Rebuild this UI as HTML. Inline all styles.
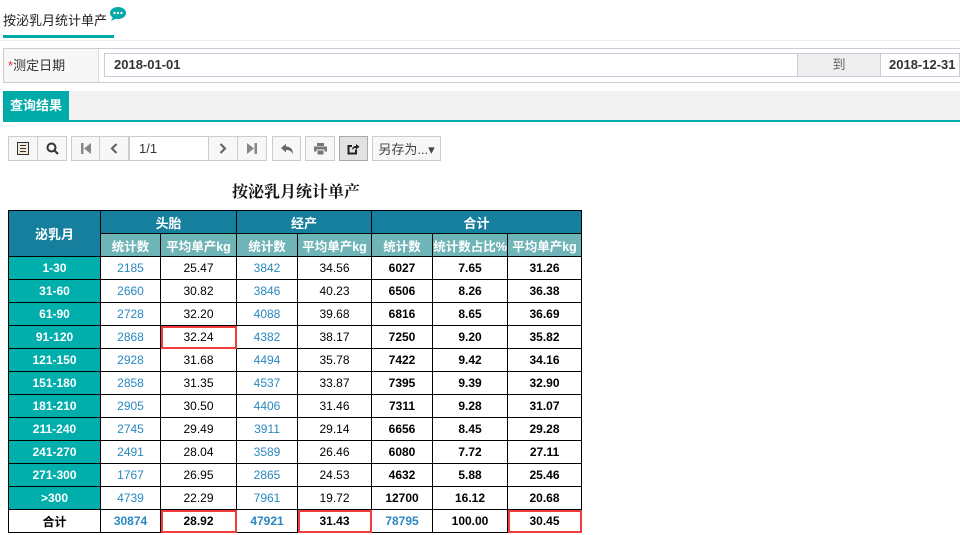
<!DOCTYPE html><html><head><meta charset="utf-8"><style>
body{margin:0;width:960px;height:535px;overflow:hidden;background:#fff;font-family:"Liberation Sans","Noto Sans CJK SC",sans-serif;position:relative}
.a{position:absolute}
.btn{position:absolute;top:136px;height:25px;border:1px solid #ccc;background:#f7f7f7;box-sizing:border-box;display:flex;align-items:center;justify-content:center;color:#555;font-size:13px}
table{position:absolute;left:8px;top:210px;border-collapse:collapse;table-layout:fixed;font-size:12px}
td{border:1px solid #000;height:22px;padding:0;text-align:center;box-sizing:border-box}
.h1{background:#177f9e;color:#fff;font-weight:bold;font-size:13px}
.h2{background:#6fb4b7;color:#fff;font-weight:bold;font-size:12.5px}
.l{background:#00aeac;color:#fff;font-weight:bold}
.b{color:#2a88c0}
.k{font-weight:bold}
.r{outline:2px solid #f03c3c;outline-offset:-2px}
</style></head><body>
<div class="a" style="left:3px;top:10px;font-size:13px;color:#222">按泌乳月统计单产</div>
<svg class="a" style="left:109px;top:6px" width="18" height="16" viewBox="0 0 18 16"><ellipse cx="9" cy="7" rx="8" ry="6" fill="#00a9a6"/><path d="M4 11 L2 15 L8 12Z" fill="#00a9a6"/><circle cx="5.5" cy="7" r="1.2" fill="#fff"/><circle cx="9" cy="7" r="1.2" fill="#fff"/><circle cx="12.5" cy="7" r="1.2" fill="#fff"/></svg>
<div class="a" style="left:3px;top:35px;width:111px;height:3px;background:#00aaa8"></div>
<div class="a" style="left:0;top:40px;width:960px;height:1px;background:#eee"></div>
<div class="a" style="left:3px;top:48px;width:957px;height:35px;border:1px solid #ccc;border-right:none;box-sizing:border-box;background:#fff"></div>
<div class="a" style="left:4px;top:49px;width:95px;height:33px;background:#f7f7f7;border-right:1px solid #ddd;font-size:13px;color:#333;line-height:33px;padding-left:4px;box-sizing:border-box"><span style="color:#d33">*</span>测定日期</div>
<div class="a" style="left:104px;top:53px;width:856px;height:24px;border:1px solid #ccd;box-sizing:border-box;font-size:13px;font-weight:bold;color:#333;line-height:22px;padding-left:9px">2018-01-01</div>
<div class="a" style="left:797px;top:53px;width:84px;height:24px;background:#eee;border:1px solid #ccd;box-sizing:border-box;font-size:13px;color:#666;text-align:center;line-height:22px">到</div>
<div class="a" style="left:889px;top:53px;font-size:13px;font-weight:bold;color:#333;line-height:24px">2018-12-31</div>
<div class="a" style="left:3px;top:91px;width:957px;height:29px;background:#f2f2f2"></div>
<div class="a" style="left:3px;top:91px;width:66px;height:29px;background:#00aaa8;color:#fff;font-size:13px;font-weight:bold;line-height:29px;text-align:center">查询结果</div>
<div class="a" style="left:3px;top:120px;width:957px;height:2px;background:#00aaa8"></div>
<div class="btn" style="left:8px;width:30px"><svg width="12" height="13"><rect x="0.5" y="0.5" width="11" height="12" fill="#f3e9d8" stroke="#333"/><path d="M3 3.5H9M3 6.5H9M3 9.5H9" stroke="#333"/></svg></div>
<div class="btn" style="left:37px;width:30px"><svg width="13" height="13"><circle cx="5.5" cy="5.5" r="4" stroke="#333" stroke-width="2" fill="none"/><path d="M8.5 8.5 L12 12" stroke="#333" stroke-width="2"/></svg></div>
<div class="btn" style="left:71px;width:29px"><svg width="10" height="11"><rect x="0" y="0" width="2.5" height="11" fill="#888"/><path d="M10 0 L3 5.5 L10 11Z" fill="#888"/></svg></div>
<div class="btn" style="left:99px;width:30px"><svg width="8" height="11"><path d="M6.5 1 L2 5.5 L6.5 10" stroke="#666" stroke-width="2.2" fill="none"/></svg></div>
<div class="btn" style="left:129px;width:80px;background:#fff;justify-content:flex-start;padding-left:9px;color:#333">1/1</div>
<div class="btn" style="left:208px;width:30px"><svg width="8" height="11"><path d="M1.5 1 L6 5.5 L1.5 10" stroke="#666" stroke-width="2.2" fill="none"/></svg></div>
<div class="btn" style="left:237px;width:30px"><svg width="10" height="11"><path d="M0 0 L7 5.5 L0 11Z" fill="#888"/><rect x="7.5" y="0" width="2.5" height="11" fill="#888"/></svg></div>
<div class="btn" style="left:272px;width:29px"><svg width="12" height="10"><path d="M0 4 L5 0 V2.5 C9 2.5 12 5 12 10 C10 6.5 8 6 5 6 V8.5Z" fill="#666"/></svg></div>
<div class="btn" style="left:305px;width:30px"><svg width="13" height="12"><rect x="3" y="0" width="7" height="3" fill="#777"/><rect x="0" y="3.5" width="13" height="5" fill="#777"/><rect x="3" y="7" width="7" height="5" fill="#777" stroke="#f7f7f7"/></svg></div>
<div class="btn" style="left:339px;width:29px;background:#e2e2e2;border-color:#aaa"><svg width="13" height="12"><path d="M9 6.5V10.5H1.5V3H5" stroke="#222" stroke-width="2" fill="none"/><path d="M5 7 C5 4 7 3 9 3 V1 L12.5 3.8 L9 6.5 V5 C7.5 5 6 5.5 5 7Z" fill="#222"/></svg></div>
<div class="btn" style="left:372px;width:69px;color:#444">另存为...&#9662;</div>
<div class="a" style="left:0;width:592px;top:179px;text-align:center;font-size:16px;font-weight:bold;font-family:'Liberation Serif','Noto Serif CJK SC',serif;color:#111">按泌乳月统计单产</div>
<table>
<colgroup><col style="width:92px"><col style="width:60px"><col style="width:76px"><col style="width:61px"><col style="width:74px"><col style="width:61px"><col style="width:75px"><col style="width:74px"></colgroup>
<tr style="height:23px"><td class="h1" rowspan="2">泌乳月</td><td class="h1" colspan="2">头胎</td><td class="h1" colspan="2">经产</td><td class="h1" colspan="3">合计</td></tr>
<tr style="height:23px"><td class="h2">统计数</td><td class="h2">平均单产kg</td><td class="h2">统计数</td><td class="h2">平均单产kg</td><td class="h2">统计数</td><td class="h2" style="white-space:nowrap;overflow:hidden">统计数占比%</td><td class="h2">平均单产kg</td></tr>
<tr style="height:23px"><td class="l">1-30</td><td class="b">2185</td><td>25.47</td><td class="b">3842</td><td>34.56</td><td class="k">6027</td><td class="k">7.65</td><td class="k">31.26</td></tr>
<tr style="height:23px"><td class="l">31-60</td><td class="b">2660</td><td>30.82</td><td class="b">3846</td><td>40.23</td><td class="k">6506</td><td class="k">8.26</td><td class="k">36.38</td></tr>
<tr style="height:23px"><td class="l">61-90</td><td class="b">2728</td><td>32.20</td><td class="b">4088</td><td>39.68</td><td class="k">6816</td><td class="k">8.65</td><td class="k">36.69</td></tr>
<tr style="height:23px"><td class="l">91-120</td><td class="b">2868</td><td class="r">32.24</td><td class="b">4382</td><td>38.17</td><td class="k">7250</td><td class="k">9.20</td><td class="k">35.82</td></tr>
<tr style="height:23px"><td class="l">121-150</td><td class="b">2928</td><td>31.68</td><td class="b">4494</td><td>35.78</td><td class="k">7422</td><td class="k">9.42</td><td class="k">34.16</td></tr>
<tr style="height:23px"><td class="l">151-180</td><td class="b">2858</td><td>31.35</td><td class="b">4537</td><td>33.87</td><td class="k">7395</td><td class="k">9.39</td><td class="k">32.90</td></tr>
<tr style="height:23px"><td class="l">181-210</td><td class="b">2905</td><td>30.50</td><td class="b">4406</td><td>31.46</td><td class="k">7311</td><td class="k">9.28</td><td class="k">31.07</td></tr>
<tr style="height:23px"><td class="l">211-240</td><td class="b">2745</td><td>29.49</td><td class="b">3911</td><td>29.14</td><td class="k">6656</td><td class="k">8.45</td><td class="k">29.28</td></tr>
<tr style="height:23px"><td class="l">241-270</td><td class="b">2491</td><td>28.04</td><td class="b">3589</td><td>26.46</td><td class="k">6080</td><td class="k">7.72</td><td class="k">27.11</td></tr>
<tr style="height:23px"><td class="l">271-300</td><td class="b">1767</td><td>26.95</td><td class="b">2865</td><td>24.53</td><td class="k">4632</td><td class="k">5.88</td><td class="k">25.46</td></tr>
<tr style="height:23px"><td class="l">&gt;300</td><td class="b">4739</td><td>22.29</td><td class="b">7961</td><td>19.72</td><td class="k">12700</td><td class="k">16.12</td><td class="k">20.68</td></tr>
<tr style="height:23px"><td class="k">合计</td><td class="b k">30874</td><td class="k r">28.92</td><td class="b k">47921</td><td class="k r">31.43</td><td class="b k">78795</td><td class="k">100.00</td><td class="k r">30.45</td></tr>
</table>
</body></html>
